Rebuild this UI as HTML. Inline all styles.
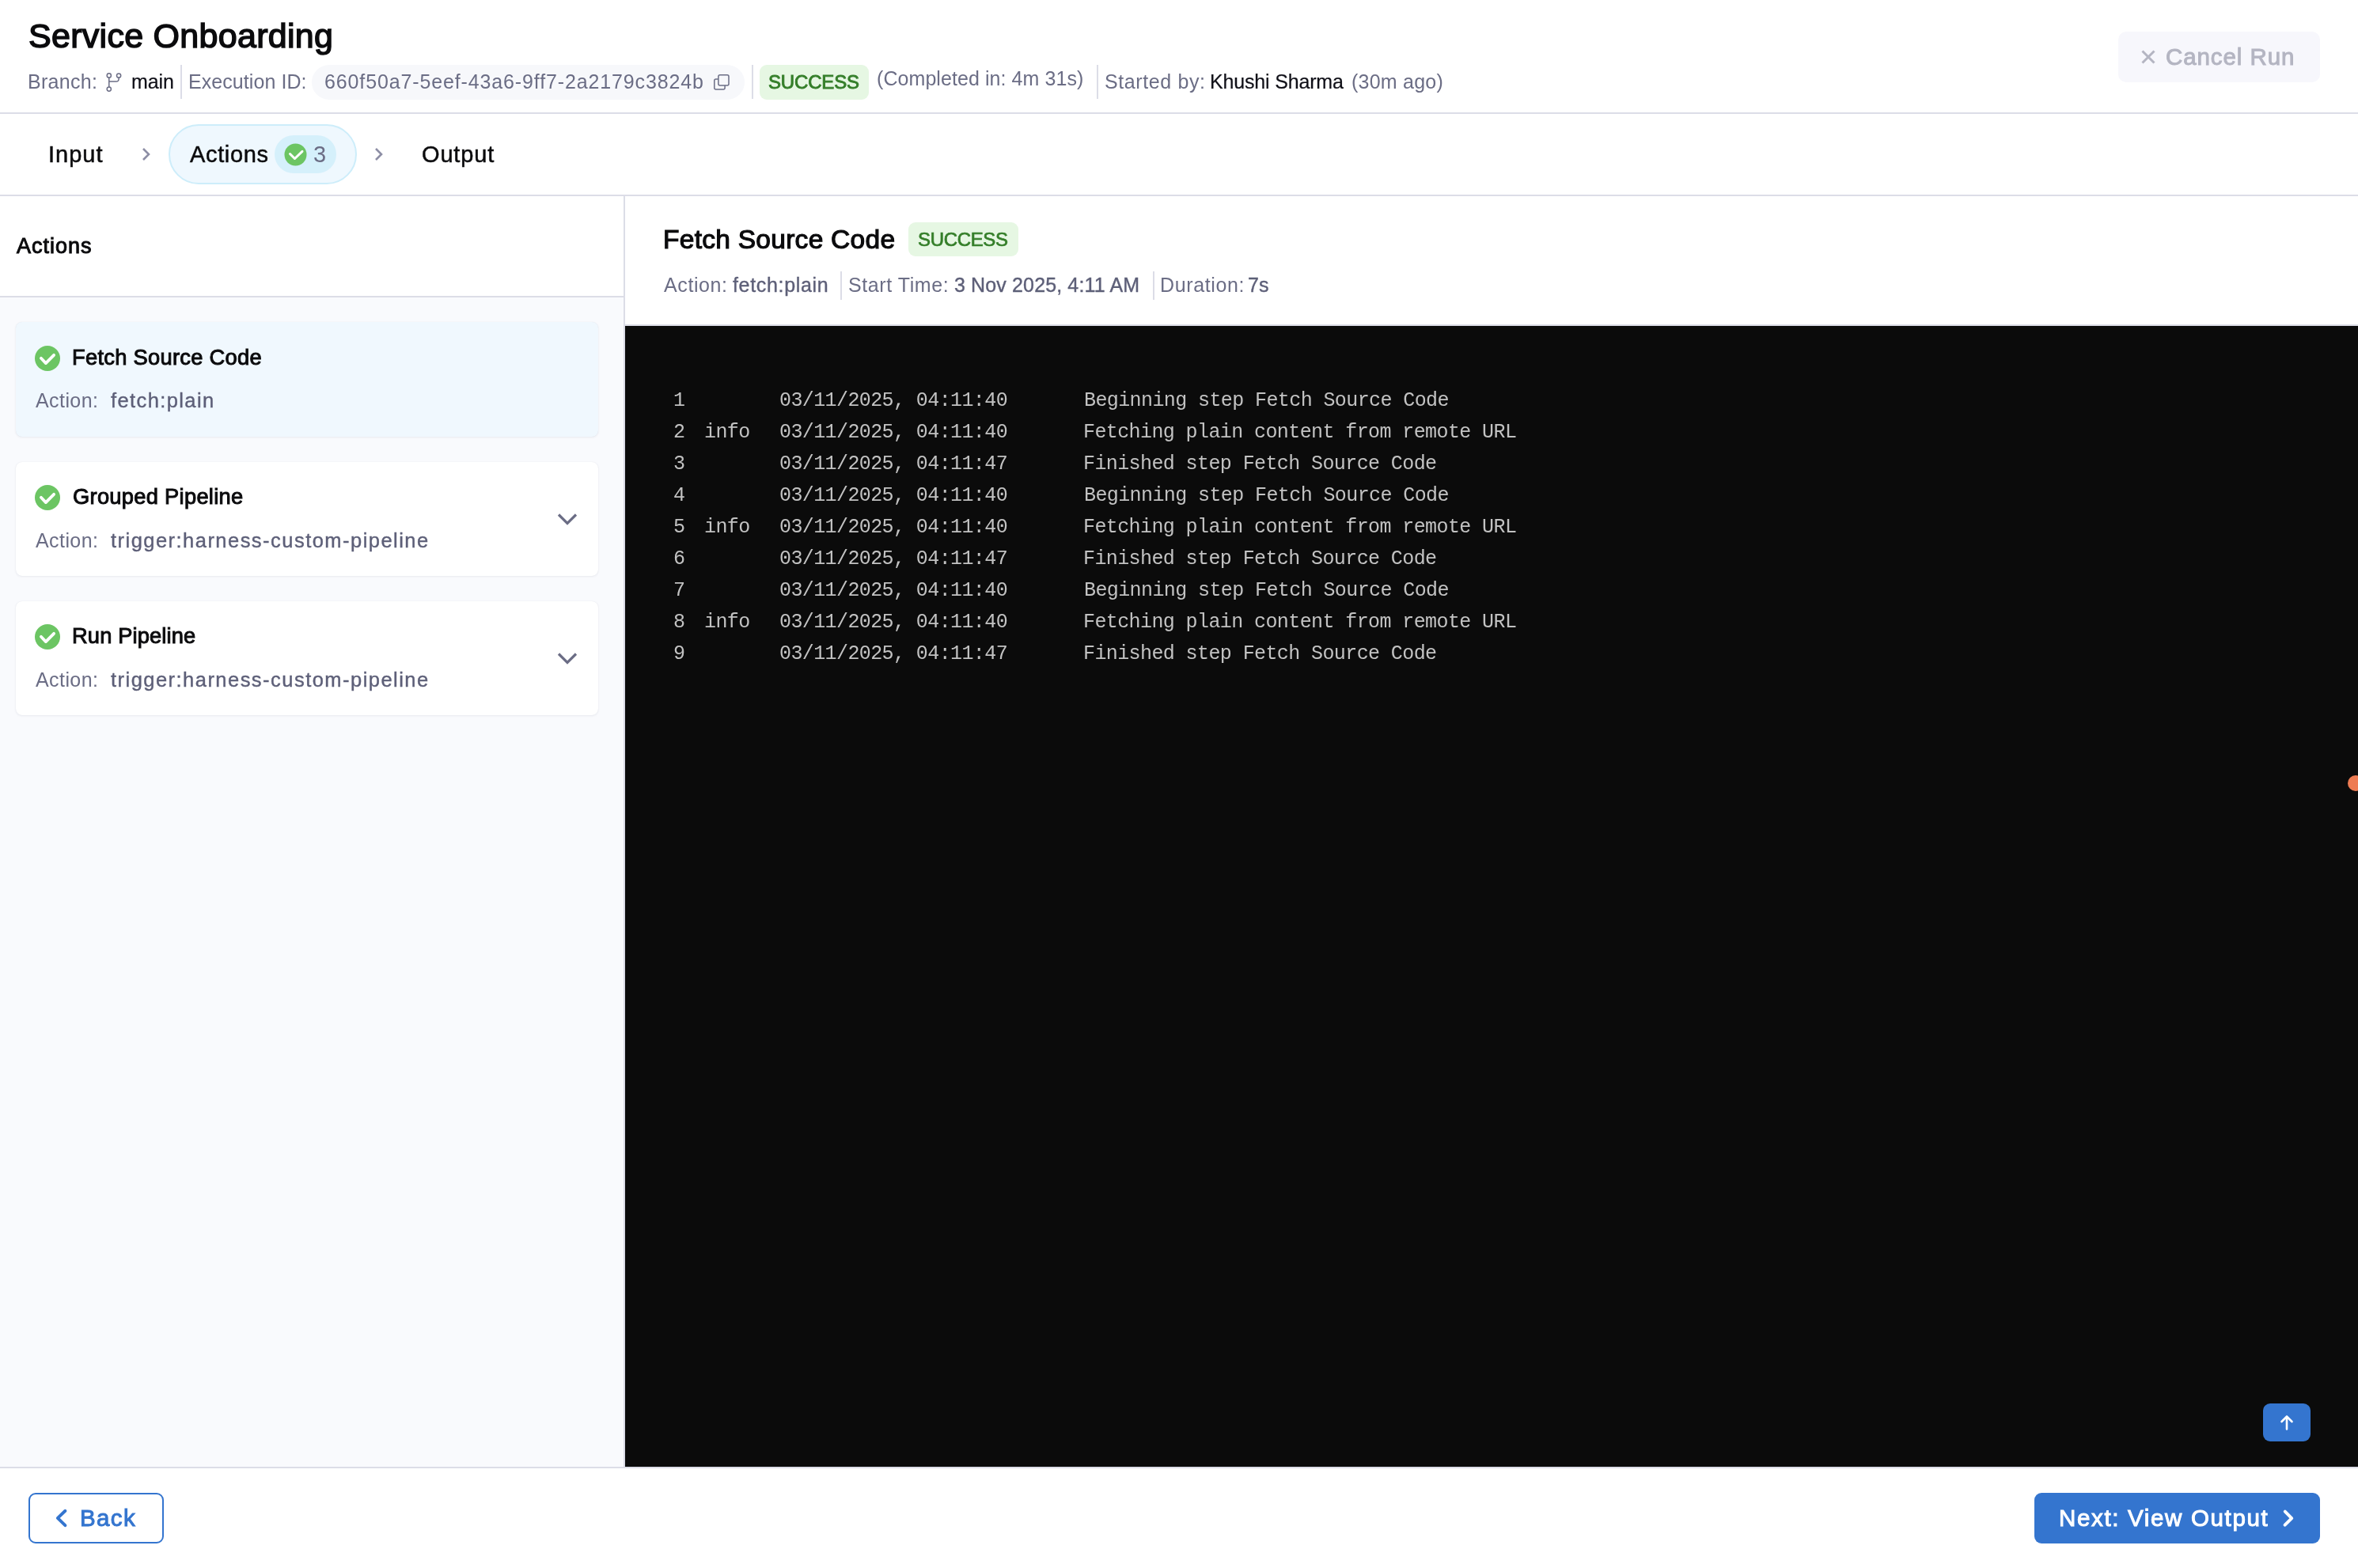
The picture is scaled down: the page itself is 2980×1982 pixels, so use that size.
<!DOCTYPE html>
<html><head><meta charset="utf-8">
<style>
*{margin:0;padding:0;box-sizing:border-box}
html,body{margin:0;overflow:hidden;background:#fff;font-family:"Liberation Sans",sans-serif;color:#0b0b0d}
#root{position:relative;width:2980px;height:1982px;overflow:hidden;transform-origin:0 0;background:#fff}
.a{position:absolute;white-space:nowrap;line-height:1}
.t{will-change:transform}
svg{position:absolute;overflow:visible}
</style></head><body><div id="root">
<div class="a" style="left:0px;top:142px;width:2980px;height:2px;background:#dcdde7;border-radius:0px;"></div>
<div class="a" style="left:0px;top:246px;width:2980px;height:2px;background:#dcdde7;border-radius:0px;"></div>
<div class="a" style="left:0px;top:248px;width:788px;height:1606px;background:#f9fafd;border-radius:0px;"></div>
<div class="a" style="left:0px;top:248px;width:788px;height:126px;background:#fff;border-radius:0px;"></div>
<div class="a" style="left:0px;top:374px;width:788px;height:2px;background:#dcdde7;border-radius:0px;"></div>
<div class="a" style="left:788px;top:248px;width:2px;height:1606px;background:#dcdde7;border-radius:0px;"></div>
<div class="a" style="left:790px;top:410px;width:2190px;height:2px;background:#dcdde7;border-radius:0px;"></div>
<div class="a" style="left:790px;top:412px;width:2190px;height:1442px;background:#0b0b0b;border-radius:0px;"></div>
<div class="a" style="left:0px;top:1854px;width:2980px;height:2px;background:#dcdde7;border-radius:0px;"></div>
<div class="a t" style="left:36.00px;top:24.00px;font-size:43px;font-weight:normal;color:#0b0b0d;letter-spacing:0.286px;font-family:'Liberation Sans',sans-serif;-webkit-text-stroke:1.5px #0b0b0d">Service Onboarding</div>
<div class="a t" style="left:35.00px;top:90.50px;font-size:25px;font-weight:normal;color:#6b6d85;letter-spacing:0.298px;font-family:'Liberation Sans',sans-serif">Branch:</div>
<svg style="left:130px;top:88px" width="26" height="30" viewBox="0 0 26 30"><g fill="none" stroke="#6b6d85" stroke-width="1.5"><circle cx="7.8" cy="7.4" r="2.6"/><circle cx="20.1" cy="7.5" r="2.6"/><circle cx="7.8" cy="24.6" r="2.6"/><path d="M7.8 10V22M7.8 15.1H17.1a3 3 0 0 0 3-3V10.1"/></g></svg>
<div class="a t" style="left:166.00px;top:90.50px;font-size:25px;font-weight:normal;color:#101018;letter-spacing:-0.094px;font-family:'Liberation Sans',sans-serif;-webkit-text-stroke:0.2px #101018">main</div>
<div class="a" style="left:228px;top:82px;width:2px;height:43px;background:#dcdde7;border-radius:0px;"></div>
<div class="a t" style="left:237.50px;top:90.50px;font-size:25px;font-weight:normal;color:#6b6d85;letter-spacing:0.064px;font-family:'Liberation Sans',sans-serif">Execution ID:</div>
<div class="a" style="left:394px;top:82px;width:547px;height:44px;background:#f7f8fb;border-radius:22px;"></div>
<div class="a t" style="left:410.00px;top:90.50px;font-size:25px;font-weight:normal;color:#6b6d85;letter-spacing:0.868px;font-family:'Liberation Sans',sans-serif">660f50a7-5eef-43a6-9ff7-2a2179c3824b</div>
<svg style="left:900px;top:92px" width="24" height="24" viewBox="0 0 24 24"><g fill="none" stroke="#6b6d85" stroke-width="1.5"><rect x="7.9" y="2.8" width="13.1" height="13.3" rx="2"/><path d="M7.9 8H4.8a2 2 0 0 0-2 2V19a2 2 0 0 0 2 2H14.1a2 2 0 0 0 2-2V16.1"/></g></svg>
<div class="a" style="left:950px;top:82px;width:2px;height:43px;background:#dcdde7;border-radius:0px;"></div>
<div class="a" style="left:960px;top:82px;width:138px;height:44px;background:#e6f7e3;border-radius:9px;"></div>
<div class="a t" style="left:971.00px;top:91.50px;font-size:24px;font-weight:normal;color:#347e29;letter-spacing:-0.170px;font-family:'Liberation Sans',sans-serif;-webkit-text-stroke:0.9px #347e29">SUCCESS</div>
<div class="a t" style="left:1108.00px;top:86.50px;font-size:25px;font-weight:normal;color:#6b6d85;letter-spacing:0.071px;font-family:'Liberation Sans',sans-serif">(Completed in: 4m 31s)</div>
<div class="a" style="left:1386px;top:82px;width:2px;height:43px;background:#dcdde7;border-radius:0px;"></div>
<div class="a t" style="left:1396.00px;top:90.50px;font-size:25px;font-weight:normal;color:#6b6d85;letter-spacing:0.605px;font-family:'Liberation Sans',sans-serif">Started by:</div>
<div class="a t" style="left:1529.00px;top:90.50px;font-size:25px;font-weight:normal;color:#101018;letter-spacing:-0.168px;font-family:'Liberation Sans',sans-serif;-webkit-text-stroke:0.2px #101018">Khushi Sharma</div>
<div class="a t" style="left:1708.00px;top:90.50px;font-size:25px;font-weight:normal;color:#6b6d85;letter-spacing:0.236px;font-family:'Liberation Sans',sans-serif">(30m ago)</div>
<div class="a" style="left:2677px;top:40px;width:255px;height:64px;background:#f7f7fc;border-radius:10px;"></div>
<svg style="left:2705px;top:62px" width="20" height="20" viewBox="0 0 20 20"><path d="M2.5 2.5L17.5 17.5M17.5 2.5L2.5 17.5" stroke="#b4b5c2" stroke-width="3" fill="none"/></svg>
<div class="a t" style="left:2737.00px;top:56.95px;font-size:29.5px;font-weight:normal;color:#b4b5c2;letter-spacing:0.918px;font-family:'Liberation Sans',sans-serif;-webkit-text-stroke:1.0px #b4b5c2">Cancel Run</div>
<div class="a t" style="left:61.00px;top:180.50px;font-size:29px;font-weight:normal;color:#0b0b0d;letter-spacing:1.014px;font-family:'Liberation Sans',sans-serif;-webkit-text-stroke:0.5px #0b0b0d">Input</div>
<svg style="left:178px;top:186px" width="14" height="18" viewBox="0 0 14 18"><path d="M3 2l7 7-7 7" stroke="#8d8ea5" stroke-width="2.6" fill="none"/></svg>
<div class="a" style="left:213px;top:157px;width:238px;height:76px;background:#eff8fe;border-radius:38px;border:2px solid #cdedfa;"></div>
<div class="a t" style="left:239.50px;top:180.50px;font-size:29px;font-weight:normal;color:#0b0b0d;letter-spacing:0.650px;font-family:'Liberation Sans',sans-serif;-webkit-text-stroke:0.5px #0b0b0d">Actions</div>
<div class="a" style="left:347px;top:171px;width:78px;height:48px;background:#d5f0fb;border-radius:24px;"></div>
<svg style="left:359px;top:181px" width="29" height="29" viewBox="0 0 29 29"><circle cx="14.5" cy="14.5" r="14" fill="#6cc563"/><path d="M7.5 13.5l6 6L23 10.3" stroke="#fff" stroke-width="3" fill="none" stroke-linecap="round" stroke-linejoin="round"/></svg>
<div class="a t" style="left:396.00px;top:180.50px;font-size:29px;font-weight:normal;color:#6b6d85;letter-spacing:0.000px;font-family:'Liberation Sans',sans-serif">3</div>
<svg style="left:472px;top:186px" width="14" height="18" viewBox="0 0 14 18"><path d="M3 2l7 7-7 7" stroke="#8d8ea5" stroke-width="2.6" fill="none"/></svg>
<div class="a t" style="left:533.00px;top:180.50px;font-size:29px;font-weight:normal;color:#0b0b0d;letter-spacing:0.840px;font-family:'Liberation Sans',sans-serif;-webkit-text-stroke:0.5px #0b0b0d">Output</div>
<div class="a t" style="left:21.00px;top:297.50px;font-size:27px;font-weight:normal;color:#0b0b0d;letter-spacing:0.993px;font-family:'Liberation Sans',sans-serif;-webkit-text-stroke:1.0px #0b0b0d">Actions</div>
<div class="a" style="left:20px;top:407px;width:736px;height:145px;background:#f0f8fe;border-radius:8px;box-shadow:0 1px 3px rgba(40,40,80,0.07),0 0 1px rgba(40,40,80,0.10);"></div>
<svg style="left:44px;top:436.75px" width="32" height="32" viewBox="0 0 32 32"><circle cx="16" cy="16" r="16" fill="#6cc563"/><path d="M7.9 15.8l6 6.3L24.1 11.8" stroke="#fff" stroke-width="3.8" fill="none" stroke-linecap="round" stroke-linejoin="round"/></svg>
<div class="a t" style="left:91.00px;top:437.60px;font-size:27.3px;font-weight:normal;color:#0b0b0d;letter-spacing:0.281px;font-family:'Liberation Sans',sans-serif;-webkit-text-stroke:1.0px #0b0b0d">Fetch Source Code</div>
<div class="a t" style="left:45.00px;top:494.25px;font-size:25px;font-weight:normal;color:#6b6d85;letter-spacing:0.420px;font-family:'Liberation Sans',sans-serif">Action:</div>
<div class="a t" style="left:140.00px;top:494.25px;font-size:25.5px;font-weight:normal;color:#5d5f78;letter-spacing:1.394px;font-family:'Liberation Sans',sans-serif;-webkit-text-stroke:0.4px #5d5f78">fetch:plain</div>
<div class="a" style="left:20px;top:584px;width:736px;height:144px;background:#fff;border-radius:8px;box-shadow:0 1px 3px rgba(40,40,80,0.07),0 0 1px rgba(40,40,80,0.10);"></div>
<svg style="left:44px;top:613.25px" width="32" height="32" viewBox="0 0 32 32"><circle cx="16" cy="16" r="16" fill="#6cc563"/><path d="M7.9 15.8l6 6.3L24.1 11.8" stroke="#fff" stroke-width="3.8" fill="none" stroke-linecap="round" stroke-linejoin="round"/></svg>
<div class="a t" style="left:92.00px;top:613.85px;font-size:27.3px;font-weight:normal;color:#0b0b0d;letter-spacing:0.283px;font-family:'Liberation Sans',sans-serif;-webkit-text-stroke:1.0px #0b0b0d">Grouped Pipeline</div>
<div class="a t" style="left:45.00px;top:671.00px;font-size:25px;font-weight:normal;color:#6b6d85;letter-spacing:0.420px;font-family:'Liberation Sans',sans-serif">Action:</div>
<div class="a t" style="left:140.00px;top:671.00px;font-size:25.5px;font-weight:normal;color:#5d5f78;letter-spacing:1.467px;font-family:'Liberation Sans',sans-serif;-webkit-text-stroke:0.4px #5d5f78">trigger:harness-custom-pipeline</div>
<svg style="left:702px;top:646.5px" width="30" height="20" viewBox="0 0 30 20"><path d="M4 3.5l11 11 11-11" stroke="#6b6d85" stroke-width="3.2" fill="none"/></svg>
<div class="a" style="left:20px;top:760px;width:736px;height:144px;background:#fff;border-radius:8px;box-shadow:0 1px 3px rgba(40,40,80,0.07),0 0 1px rgba(40,40,80,0.10);"></div>
<svg style="left:44px;top:789px" width="32" height="32" viewBox="0 0 32 32"><circle cx="16" cy="16" r="16" fill="#6cc563"/><path d="M7.9 15.8l6 6.3L24.1 11.8" stroke="#fff" stroke-width="3.8" fill="none" stroke-linecap="round" stroke-linejoin="round"/></svg>
<div class="a t" style="left:91.00px;top:789.60px;font-size:27.3px;font-weight:normal;color:#0b0b0d;letter-spacing:0.127px;font-family:'Liberation Sans',sans-serif;-webkit-text-stroke:1.0px #0b0b0d">Run Pipeline</div>
<div class="a t" style="left:45.00px;top:846.75px;font-size:25px;font-weight:normal;color:#6b6d85;letter-spacing:0.420px;font-family:'Liberation Sans',sans-serif">Action:</div>
<div class="a t" style="left:140.00px;top:846.75px;font-size:25.5px;font-weight:normal;color:#5d5f78;letter-spacing:1.467px;font-family:'Liberation Sans',sans-serif;-webkit-text-stroke:0.4px #5d5f78">trigger:harness-custom-pipeline</div>
<svg style="left:702px;top:822.5px" width="30" height="20" viewBox="0 0 30 20"><path d="M4 3.5l11 11 11-11" stroke="#6b6d85" stroke-width="3.2" fill="none"/></svg>
<div class="a t" style="left:837.60px;top:286.15px;font-size:33.5px;font-weight:normal;color:#0b0b0d;letter-spacing:0.275px;font-family:'Liberation Sans',sans-serif;-webkit-text-stroke:1.2px #0b0b0d">Fetch Source Code</div>
<div class="a" style="left:1148px;top:281px;width:139px;height:43px;background:#e6f7e3;border-radius:9px;"></div>
<div class="a t" style="left:1160.00px;top:290.50px;font-size:24px;font-weight:normal;color:#347e29;letter-spacing:-0.337px;font-family:'Liberation Sans',sans-serif;-webkit-text-stroke:0.7px #347e29">SUCCESS</div>
<div class="a t" style="left:838.50px;top:347.50px;font-size:25px;font-weight:normal;color:#6b6d85;letter-spacing:0.603px;font-family:'Liberation Sans',sans-serif">Action:</div>
<div class="a t" style="left:925.50px;top:347.50px;font-size:25px;font-weight:normal;color:#5d5f78;letter-spacing:0.674px;font-family:'Liberation Sans',sans-serif;-webkit-text-stroke:0.4px #5d5f78">fetch:plain</div>
<div class="a" style="left:1062px;top:343px;width:2px;height:36px;background:#dcdde7;border-radius:0px;"></div>
<div class="a t" style="left:1071.60px;top:347.50px;font-size:25px;font-weight:normal;color:#6b6d85;letter-spacing:0.573px;font-family:'Liberation Sans',sans-serif">Start Time:</div>
<div class="a t" style="left:1206.00px;top:347.50px;font-size:25px;font-weight:normal;color:#5d5f78;letter-spacing:0.134px;font-family:'Liberation Sans',sans-serif;-webkit-text-stroke:0.4px #5d5f78">3 Nov 2025, 4:11 AM</div>
<div class="a" style="left:1457px;top:343px;width:2px;height:36px;background:#dcdde7;border-radius:0px;"></div>
<div class="a t" style="left:1465.50px;top:347.50px;font-size:25px;font-weight:normal;color:#6b6d85;letter-spacing:0.626px;font-family:'Liberation Sans',sans-serif">Duration:</div>
<div class="a t" style="left:1577.00px;top:347.50px;font-size:25px;font-weight:normal;color:#5d5f78;letter-spacing:0.096px;font-family:'Liberation Sans',sans-serif;-webkit-text-stroke:0.4px #5d5f78">7s</div>
<div class="a t" style="left:851.00px;top:494.00px;font-size:25px;font-weight:normal;color:#c2c2c2;letter-spacing:-0.600px;font-family:'Liberation Mono',monospace">1</div>
<div class="a t" style="left:985.00px;top:494.00px;font-size:25px;font-weight:normal;color:#c2c2c2;letter-spacing:-0.600px;font-family:'Liberation Mono',monospace">03/11/2025, 04:11:40</div>
<div class="a t" style="left:1370.00px;top:494.00px;font-size:25px;font-weight:normal;color:#c2c2c2;letter-spacing:-0.600px;font-family:'Liberation Mono',monospace">Beginning step Fetch Source Code</div>
<div class="a t" style="left:851.00px;top:534.00px;font-size:25px;font-weight:normal;color:#c2c2c2;letter-spacing:-0.600px;font-family:'Liberation Mono',monospace">2</div>
<div class="a t" style="left:890.00px;top:534.00px;font-size:25px;font-weight:normal;color:#c2c2c2;letter-spacing:-0.600px;font-family:'Liberation Mono',monospace">info</div>
<div class="a t" style="left:985.00px;top:534.00px;font-size:25px;font-weight:normal;color:#c2c2c2;letter-spacing:-0.600px;font-family:'Liberation Mono',monospace">03/11/2025, 04:11:40</div>
<div class="a t" style="left:1369.00px;top:534.00px;font-size:25px;font-weight:normal;color:#c2c2c2;letter-spacing:-0.600px;font-family:'Liberation Mono',monospace">Fetching plain content from remote URL</div>
<div class="a t" style="left:851.00px;top:574.00px;font-size:25px;font-weight:normal;color:#c2c2c2;letter-spacing:-0.600px;font-family:'Liberation Mono',monospace">3</div>
<div class="a t" style="left:985.00px;top:574.00px;font-size:25px;font-weight:normal;color:#c2c2c2;letter-spacing:-0.600px;font-family:'Liberation Mono',monospace">03/11/2025, 04:11:47</div>
<div class="a t" style="left:1369.00px;top:574.00px;font-size:25px;font-weight:normal;color:#c2c2c2;letter-spacing:-0.600px;font-family:'Liberation Mono',monospace">Finished step Fetch Source Code</div>
<div class="a t" style="left:851.00px;top:614.00px;font-size:25px;font-weight:normal;color:#c2c2c2;letter-spacing:-0.600px;font-family:'Liberation Mono',monospace">4</div>
<div class="a t" style="left:985.00px;top:614.00px;font-size:25px;font-weight:normal;color:#c2c2c2;letter-spacing:-0.600px;font-family:'Liberation Mono',monospace">03/11/2025, 04:11:40</div>
<div class="a t" style="left:1370.00px;top:614.00px;font-size:25px;font-weight:normal;color:#c2c2c2;letter-spacing:-0.600px;font-family:'Liberation Mono',monospace">Beginning step Fetch Source Code</div>
<div class="a t" style="left:851.00px;top:654.00px;font-size:25px;font-weight:normal;color:#c2c2c2;letter-spacing:-0.600px;font-family:'Liberation Mono',monospace">5</div>
<div class="a t" style="left:890.00px;top:654.00px;font-size:25px;font-weight:normal;color:#c2c2c2;letter-spacing:-0.600px;font-family:'Liberation Mono',monospace">info</div>
<div class="a t" style="left:985.00px;top:654.00px;font-size:25px;font-weight:normal;color:#c2c2c2;letter-spacing:-0.600px;font-family:'Liberation Mono',monospace">03/11/2025, 04:11:40</div>
<div class="a t" style="left:1369.00px;top:654.00px;font-size:25px;font-weight:normal;color:#c2c2c2;letter-spacing:-0.600px;font-family:'Liberation Mono',monospace">Fetching plain content from remote URL</div>
<div class="a t" style="left:851.00px;top:694.00px;font-size:25px;font-weight:normal;color:#c2c2c2;letter-spacing:-0.600px;font-family:'Liberation Mono',monospace">6</div>
<div class="a t" style="left:985.00px;top:694.00px;font-size:25px;font-weight:normal;color:#c2c2c2;letter-spacing:-0.600px;font-family:'Liberation Mono',monospace">03/11/2025, 04:11:47</div>
<div class="a t" style="left:1369.00px;top:694.00px;font-size:25px;font-weight:normal;color:#c2c2c2;letter-spacing:-0.600px;font-family:'Liberation Mono',monospace">Finished step Fetch Source Code</div>
<div class="a t" style="left:851.00px;top:734.00px;font-size:25px;font-weight:normal;color:#c2c2c2;letter-spacing:-0.600px;font-family:'Liberation Mono',monospace">7</div>
<div class="a t" style="left:985.00px;top:734.00px;font-size:25px;font-weight:normal;color:#c2c2c2;letter-spacing:-0.600px;font-family:'Liberation Mono',monospace">03/11/2025, 04:11:40</div>
<div class="a t" style="left:1370.00px;top:734.00px;font-size:25px;font-weight:normal;color:#c2c2c2;letter-spacing:-0.600px;font-family:'Liberation Mono',monospace">Beginning step Fetch Source Code</div>
<div class="a t" style="left:851.00px;top:774.00px;font-size:25px;font-weight:normal;color:#c2c2c2;letter-spacing:-0.600px;font-family:'Liberation Mono',monospace">8</div>
<div class="a t" style="left:890.00px;top:774.00px;font-size:25px;font-weight:normal;color:#c2c2c2;letter-spacing:-0.600px;font-family:'Liberation Mono',monospace">info</div>
<div class="a t" style="left:985.00px;top:774.00px;font-size:25px;font-weight:normal;color:#c2c2c2;letter-spacing:-0.600px;font-family:'Liberation Mono',monospace">03/11/2025, 04:11:40</div>
<div class="a t" style="left:1369.00px;top:774.00px;font-size:25px;font-weight:normal;color:#c2c2c2;letter-spacing:-0.600px;font-family:'Liberation Mono',monospace">Fetching plain content from remote URL</div>
<div class="a t" style="left:851.00px;top:814.00px;font-size:25px;font-weight:normal;color:#c2c2c2;letter-spacing:-0.600px;font-family:'Liberation Mono',monospace">9</div>
<div class="a t" style="left:985.00px;top:814.00px;font-size:25px;font-weight:normal;color:#c2c2c2;letter-spacing:-0.600px;font-family:'Liberation Mono',monospace">03/11/2025, 04:11:47</div>
<div class="a t" style="left:1369.00px;top:814.00px;font-size:25px;font-weight:normal;color:#c2c2c2;letter-spacing:-0.600px;font-family:'Liberation Mono',monospace">Finished step Fetch Source Code</div>
<div class="a" style="left:2860px;top:1774px;width:60px;height:48px;background:#3475cf;border-radius:9px;"></div>
<svg style="left:2880px;top:1787px" width="20" height="22" viewBox="0 0 20 22"><path d="M10 19.5V3.5M3.5 10l6.5-6.5 6.5 6.5" stroke="#fff" stroke-width="2.6" fill="none" stroke-linecap="round" stroke-linejoin="round"/></svg>
<div class="a" style="left:2967px;top:980px;width:20px;height:20px;background:#ee7c53;border-radius:10px;"></div>
<div class="a" style="left:36px;top:1887px;width:171px;height:64px;background:#fff;border-radius:9px;border:2px solid #3475cf;"></div>
<svg style="left:70px;top:1907px" width="18" height="24" viewBox="0 0 18 24"><path d="M12.4 2.8L2.9 11.9L12.4 21.1" stroke="#3475cf" stroke-width="4" fill="none" stroke-linecap="round" stroke-linejoin="round"/></svg>
<div class="a t" style="left:101.00px;top:1903.95px;font-size:29.5px;font-weight:normal;color:#3475cf;letter-spacing:1.389px;font-family:'Liberation Sans',sans-serif;-webkit-text-stroke:1.0px #3475cf">Back</div>
<div class="a" style="left:2571px;top:1887px;width:361px;height:64px;background:#3475cf;border-radius:9px;"></div>
<div class="a t" style="left:2602.00px;top:1904.15px;font-size:29.5px;font-weight:normal;color:#fff;letter-spacing:1.662px;font-family:'Liberation Sans',sans-serif;-webkit-text-stroke:1.0px #fff">Next: View Output</div>
<svg style="left:2882px;top:1907px" width="18" height="24" viewBox="0 0 18 24"><path d="M5.8 3.7L14.2 12.1L5.6 20.6" stroke="#fff" stroke-width="4" fill="none" stroke-linecap="round" stroke-linejoin="round"/></svg>
</div>
<script>(function(){var w=window.innerWidth||2980;var s=w/2980;if(Math.abs(s-1)>0.001){document.getElementById("root").style.transform="scale("+s+")";}})();</script>
</body></html>
